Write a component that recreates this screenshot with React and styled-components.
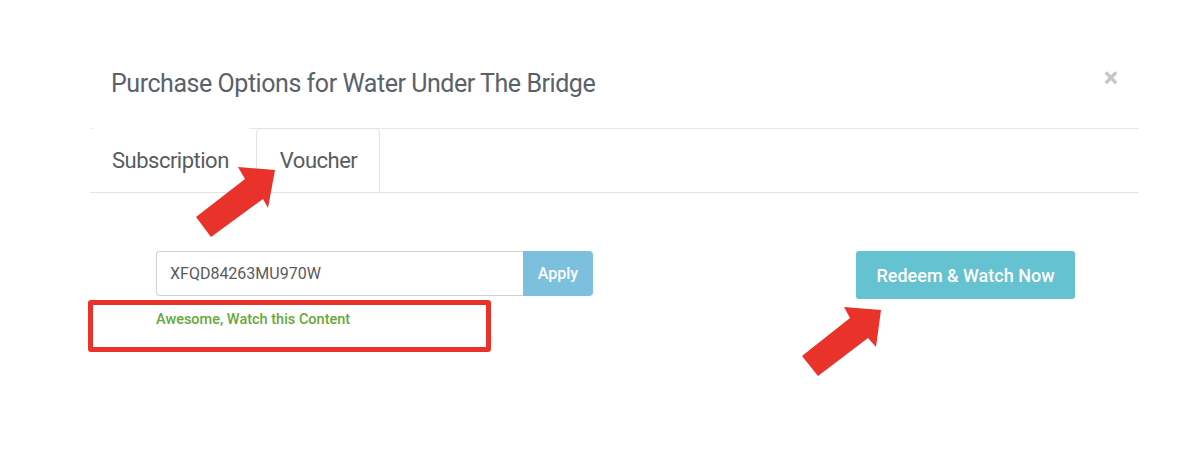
import React from 'react';
import styled, { createGlobalStyle } from 'styled-components';

const GlobalStyle = createGlobalStyle`
    body {
        margin: 0;
        background: #FFFFFF;
        font-family: Roboto, 'Liberation Sans', sans-serif;
    }
`;

const Page = styled.div`
    position: relative;
    width: 1204px;
    height: 474px;
    overflow: hidden;
    background: #FFFFFF;
`;

const Modal = styled.div`
    margin-left: 90px;
    width: 1049px;
`;

const Header = styled.div`
    box-sizing: border-box;
    height: 129px;
    padding: 66px 21px 0 21px;
    border-bottom: 1px solid #E8E8E8;
    display: flex;
    justify-content: space-between;
    align-items: flex-start;

    h4 {
        margin: 0;
        font-size: 25px;
        line-height: 36px;
        font-weight: 400;
        color: #59616A;
        letter-spacing: -0.45px;
    }
`;

const Close = styled.span`
    font-size: 27px;
    line-height: 26px;
    font-weight: 700;
    color: #C6C6C6;
    margin-top: -1px;
`;

const Tabs = styled.ul`
    list-style: none;
    margin: 0;
    padding: 0;
    height: 63px;
    display: flex;
    border-bottom: 1px solid #E3E3E3;
`;

const Tab = styled.li`
    box-sizing: border-box;
    height: 64px;
    margin-top: -1px;
    margin-right: 4px;
    padding: ${({ $first }) => ($first ? '0 22px 0 21px' : '0 22px 0 23px')};
    display: flex;
    align-items: center;
    font-size: 22px;
    letter-spacing: -0.5px;
    color: #575C61;
    border: 1px solid ${({ $active }) => ($active ? '#E3E3E3' : 'transparent')};
    border-bottom-color: ${({ $active }) => ($active ? '#FFFFFF' : 'transparent')};
    border-radius: 5px 5px 0 0;
    background: #FFFFFF;
`;

const Body = styled.div`
    position: relative;
    height: 185px;
    padding: 58px 64px 0 66px;
    display: flex;
    justify-content: space-between;
    align-items: flex-start;
`;

const VoucherForm = styled.div`
    display: flex;
    flex-direction: column;
`;

const InputGroup = styled.div`
    display: flex;
    width: 437px;
    height: 45px;
`;

const Input = styled.input`
    box-sizing: border-box;
    flex: 1;
    height: 45px;
    padding: 0 13px;
    border: 1px solid #D0D0D0;
    border-right: none;
    border-radius: 4px 0 0 4px;
    font-family: Roboto, 'Liberation Sans', sans-serif;
    font-size: 16px;
    color: #5A5A5A;
    outline: none;
`;

const ApplyButton = styled.button`
    width: 70px;
    height: 45px;
    border: none;
    border-radius: 0 4px 4px 0;
    background: #7CC0DD;
    color: #FFFFFF;
    font-family: Roboto, 'Liberation Sans', sans-serif;
    font-size: 16px;
    font-weight: 500;
`;

const Success = styled.p`
    margin: 15px 0 0 0;
    font-size: 14.5px;
    line-height: 18px;
    font-weight: 500;
    color: #66A83A;
`;

const RedeemButton = styled.button`
    width: 219px;
    height: 48px;
    border: none;
    border-radius: 3px;
    background: #64C2D1;
    color: #FFFFFF;
    font-family: Roboto, 'Liberation Sans', sans-serif;
    font-size: 18px;
    font-weight: 500;
`;

const Highlight = styled.div`
    position: absolute;
    left: 88px;
    top: 300px;
    width: 403px;
    height: 52px;
    box-sizing: border-box;
    border: 5px solid #E8322A;
    border-radius: 3px;
`;

const Arrows = styled.svg`
    position: absolute;
    left: 0;
    top: 0;
    pointer-events: none;
`;

const App = () => {
    return (
        <>
            <GlobalStyle />
            <Page>
                <Modal>
                    <Header>
                        <h4>Purchase Options for Water Under The Bridge</h4>
                        <Close>×</Close>
                    </Header>
                    <Tabs>
                        <Tab $first>Subscription</Tab>
                        <Tab $active>Voucher</Tab>
                    </Tabs>
                    <Body>
                        <VoucherForm>
                            <InputGroup>
                                <Input defaultValue="XFQD84263MU970W" />
                                <ApplyButton>Apply</ApplyButton>
                            </InputGroup>
                            <Success>Awesome, Watch this Content</Success>
                        </VoucherForm>
                        <RedeemButton>Redeem &amp; Watch Now</RedeemButton>
                    </Body>
                </Modal>
                <Highlight />
                <Arrows width="1204" height="474" viewBox="0 0 1204 474">
                    <polygon points="275,170 238,167 245,179 196,217 211,237 263,199 268,208" fill="#E8322A" />
                    <polygon points="881,310 844,307 850,318 802,356 818,376 868,338 876,347" fill="#E8322A" />
                </Arrows>
            </Page>
        </>
    );
};

export default App;
